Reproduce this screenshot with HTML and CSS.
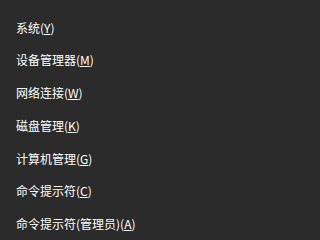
FILE: index.html
```html
<!DOCTYPE html>
<html lang="zh-CN">
<head>
<meta charset="utf-8">
<link rel="stylesheet" href="styles.css">
</head>
<body>
<ul class="menu">
  <li class="item">系统(<u>Y</u>)</li>
  <li class="item">设备管理器(<u>M</u>)</li>
  <li class="item">网络连接(<u>W</u>)</li>
  <li class="item">磁盘管理(<u>K</u>)</li>
  <li class="item">计算机管理(<u>G</u>)</li>
  <li class="item">命令提示符(<u>C</u>)</li>
  <li class="item">命令提示符(管理员)(<u>A</u>)</li>
</ul>
</body>
</html>
```

FILE: styles.css
```css
html, body {
  margin: 0;
  padding: 0;
  background: #2b2b2b;
  height: 100%;
}
.menu {
  list-style: none;
  margin: 0;
  padding: 11.5px 0 0 16px;
  font-family: "Noto Sans CJK SC", "Noto Sans", sans-serif;
  font-size: 12px;
  color: #ffffff;
}
.item {
  height: 32.75px;
  line-height: 32.75px;
  white-space: nowrap;
}
.item u {
  text-decoration-thickness: 1px;
  text-underline-offset: 1px;
}
```
